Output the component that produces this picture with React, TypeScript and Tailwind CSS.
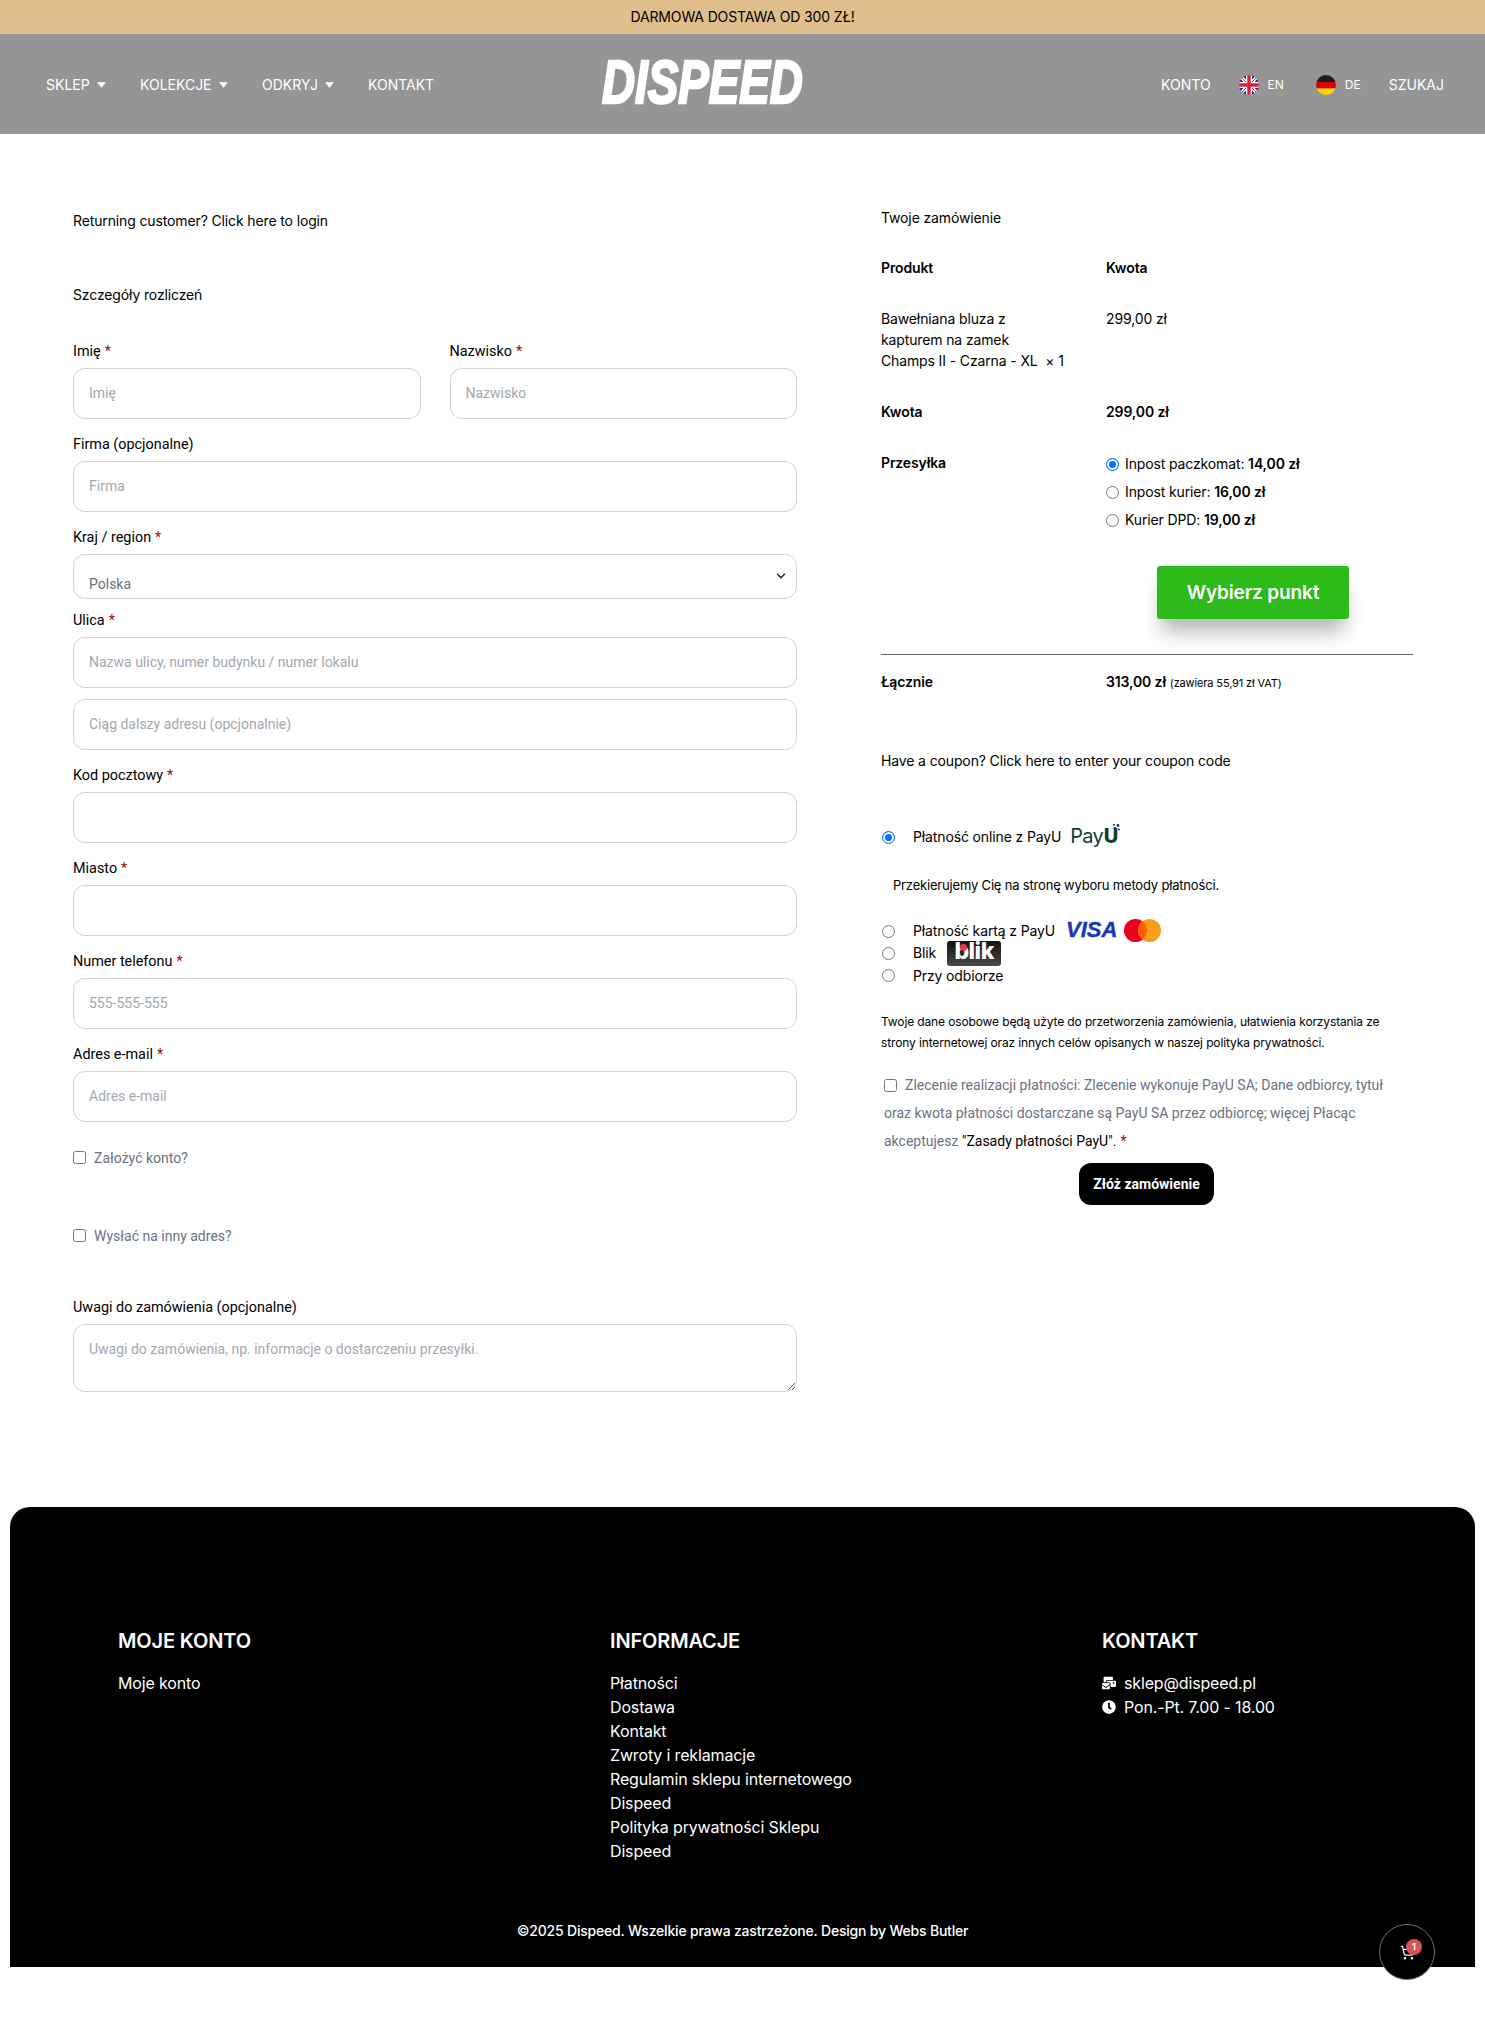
import React from 'react';
import { ChevronDown, ShoppingCart } from 'lucide-react';
import { FaClock, FaMailBulk } from 'react-icons/fa';

const Req = () => <span className="ml-[4px] text-[#b00000]">*</span>;

const inputCls =
  'block w-full h-[51px] px-[15px] pb-[2px] rounded-xl border border-[#d1d1d1] bg-white text-sm tracking-normal outline-none placeholder:text-[#a3a8b0] font-["Roboto",sans-serif]';

const Label: React.FC<{ text: string; req?: boolean }> = ({ text, req }) => (
  <label className='block h-[21px] mb-[7px] text-[14.4px] leading-[23px] tracking-normal text-black font-["Roboto",sans-serif]'>
    {text}
    {req && <Req />}
  </label>
);

const Caret = () => (
  <svg width="9" height="6" viewBox="0 0 9 6" className="ml-[7px]">
    <path d="M0.6 0.5h7.8L4.5 5.4z" fill="#fff" stroke="#fff" strokeWidth="0.6" strokeLinejoin="round" />
  </svg>
);

const Radio: React.FC<{ checked?: boolean }> = ({ checked }) => (
  <span
    className={`inline-block w-[13px] h-[13px] rounded-full shrink-0 ${
      checked ? 'border border-[#0075ff] bg-[#0075ff] shadow-[inset_0_0_0_2px_#fff]' : 'border border-[#767676] bg-white'
    }`}
  />
);

const FlagUK = () => (
  <svg width="20" height="20" viewBox="0 0 20 20">
    <defs>
      <clipPath id="uk-clip">
        <circle cx="10" cy="10" r="10" />
      </clipPath>
    </defs>
    <g clipPath="url(#uk-clip)">
      <rect width="20" height="20" fill="#1f2f8f" />
      <path d="M0 0L20 20M20 0L0 20" stroke="#fff" strokeWidth="3.4" />
      <path d="M0 0L20 20M20 0L0 20" stroke="#d8203c" strokeWidth="1" />
      <path d="M10 0V20M0 10H20" stroke="#fff" strokeWidth="6" />
      <path d="M10 0V20M0 10H20" stroke="#d8203c" strokeWidth="3.4" />
    </g>
  </svg>
);

const FlagDE = () => (
  <svg width="20" height="20" viewBox="0 0 20 20">
    <defs>
      <clipPath id="de-clip">
        <circle cx="10" cy="10" r="10" />
      </clipPath>
    </defs>
    <g clipPath="url(#de-clip)">
      <rect width="20" height="7" fill="#1c1c1c" />
      <rect y="7" width="20" height="6.5" fill="#e00000" />
      <rect y="13.5" width="20" height="6.5" fill="#ffd200" />
    </g>
  </svg>
);

// logo is a real text squeezed to the width of the original wordmark
const Logo = () => (
  <div className="w-[200px] h-[44px] mb-[6px] shrink-0">
    <span className="block w-[270px] origin-top-left scale-x-[0.75] whitespace-nowrap text-[61px] leading-[44px] italic font-black tracking-normal text-white font-['Liberation_Sans',sans-serif] [-webkit-text-stroke:2.5px_#fff]">
      DISPEED
    </span>
  </div>
);

const PayULogo = () => (
  <div className="relative w-[52px] h-[26px] text-[#0f3b3a] text-[20px] leading-[26px] tracking-[-0.8px] whitespace-nowrap">
    Pay<b className="font-extrabold ml-[1px]">U</b>
    <svg width="10" height="9" viewBox="0 0 10 9" className="absolute right-0 top-0">
      <circle cx="6" cy="2.5" r="1.4" fill="#0f3b3a" />
      <circle cx="3" cy="5.5" r="1.4" fill="#0f3b3a" />
      <circle cx="2" cy="1.7" r="1" fill="#0f3b3a" />
      <circle cx="7" cy="6.5" r="1" fill="#0f3b3a" />
    </svg>
  </div>
);

const VisaLogo = () => (
  <span className="block w-[52px] text-[22px] leading-[18px] italic font-black tracking-normal text-[#1a38b8] font-['Liberation_Sans',sans-serif] [-webkit-text-stroke:0.4px_#1a38b8]">
    VISA
  </span>
);

const MastercardLogo = () => (
  <svg width="37" height="23" viewBox="0 0 37 23" className="block">
    <circle cx="11.5" cy="11.5" r="11.5" fill="#e8001c" />
    <circle cx="25.5" cy="11.5" r="11.5" fill="#f79e1b" />
    <path d="M18.5 2.4a11.5 11.5 0 0 1 0 18.2a11.5 11.5 0 0 1 0-18.2z" fill="#ff5f00" />
  </svg>
);

const BlikLogo = () => (
  <div className="relative w-[54px] h-[25px] rounded-[3px] bg-gradient-to-b from-[#111] to-[#4a4a4a] flex items-center justify-center">
    <span className='text-white font-["Inter",sans-serif] font-extrabold text-[23px] leading-none tracking-[-0.5px] -mt-[3px]'>blik</span>
    <span className="absolute left-[13px] top-[3px] w-[7px] h-[7px] rounded-full bg-[#e8374a]" />
  </div>
);

const PayRow: React.FC<{ label: string; checked?: boolean; children?: React.ReactNode; className?: string }> = ({ label, checked, children, className }) => (
  <div className={`flex items-center ${className ?? ''}`}>
    <span className="ml-[1px] mr-[18px] flex">
      <Radio checked={checked} />
    </span>
    <span className="text-sm">{label}</span>
    {children}
  </div>
);

const ShipOption: React.FC<{ label: string; price: string; checked?: boolean }> = ({ label, price, checked }) => (
  <div className="flex items-center gap-[6px]">
    <span className="flex mt-[2px]">
      <Radio checked={checked} />
    </span>
    <span>
      {label}: <b className="font-semibold">{price}</b>
    </span>
  </div>
);

const infoLinks = ['Płatności', 'Dostawa', 'Kontakt', 'Zwroty i reklamacje', 'Regulamin sklepu internetowego Dispeed', 'Polityka prywatności Sklepu Dispeed'];

export default function App() {
  return (
    <div className='relative min-h-[2031px] bg-white text-black font-["Inter",sans-serif] text-sm tracking-[-0.13px]'>
      {/* top bar */}
      <div className="h-[34px] bg-[#dfbe8c] flex items-center justify-center text-sm">DARMOWA DOSTAWA OD 300 ZŁ!</div>

      {/* header */}
      <header className="h-[100px] pt-[2px] bg-[#959595] flex items-center text-white text-sm tracking-normal">
        <nav className="w-[602px] shrink-0 pl-[46px] flex items-center">
          <a className="flex items-center w-[94px]">SKLEP<Caret /></a>
          <a className="flex items-center w-[122px]">KOLEKCJE<Caret /></a>
          <a className="flex items-center w-[106px]">ODKRYJ<Caret /></a>
          <a>KONTAKT</a>
        </nav>
        <Logo />
        <div className="flex-1 flex items-center justify-end pr-[41px]">
          <a>KONTO</a>
          <span className="flex items-center ml-[28px]">
            <FlagUK />
            <span className="ml-[9px] text-xs">EN</span>
          </span>
          <span className="flex items-center ml-[32px]">
            <FlagDE />
            <span className="ml-[9px] text-xs">DE</span>
          </span>
          <a className="ml-[28px]">SZUKAJ</a>
        </div>
      </header>

      {/* checkout */}
      <main className="h-[1373px] flex items-start">
        <section className="ml-[73px] w-[724px] pt-[76px]">
          <p className="leading-[21px]">Returning customer? Click here to login</p>
          <h3 className="mt-[53px] leading-[21px]">Szczegóły rozliczeń</h3>

          <div className="mt-[35px] grid grid-cols-2 gap-x-[29px]">
            <div>
              <Label text="Imię" req />
              <input className={inputCls} placeholder="Imię" />
            </div>
            <div>
              <Label text="Nazwisko" req />
              <input className={inputCls} placeholder="Nazwisko" />
            </div>
          </div>

          <div className="mt-[14px]">
            <Label text="Firma (opcjonalne)" />
            <input className={inputCls} placeholder="Firma" />
          </div>

          <div className="mt-[14px]">
            <Label text="Kraj / region" req />
            <div className="relative h-[45px] rounded-xl border border-[#d1d1d1] px-[15px] pt-[19px] text-sm leading-[21px] tracking-normal text-[#6b7280] font-['Roboto',sans-serif]">
              Polska
              <ChevronDown size={14} strokeWidth={2.5} className="absolute right-[8px] top-[14px] text-[#222]" />
            </div>
          </div>

          <div className="mt-[10px]">
            <Label text="Ulica" req />
            <input className={inputCls} placeholder="Nazwa ulicy, numer budynku / numer lokalu" />
            <input className={`${inputCls} mt-[11px]`} placeholder="Ciąg dalszy adresu (opcjonalnie)" />
          </div>

          <div className="mt-[14px]">
            <Label text="Kod pocztowy" req />
            <input className={inputCls} />
          </div>
          <div className="mt-[14px]">
            <Label text="Miasto" req />
            <input className={inputCls} />
          </div>
          <div className="mt-[14px]">
            <Label text="Numer telefonu" req />
            <input className={inputCls} placeholder="555-555-555" />
          </div>
          <div className="mt-[14px]">
            <Label text="Adres e-mail" req />
            <input className={inputCls} placeholder="Adres e-mail" />
          </div>

          <label className="mt-[25px] h-[21px] flex items-center gap-[8px] text-sm tracking-normal text-[#6b7280] font-['Roboto',sans-serif]">
            <input type="checkbox" className="w-[13px] h-[13px] m-0" />
            Założyć konto?
          </label>
          <label className="mt-[57px] h-[21px] flex items-center gap-[8px] text-sm tracking-normal text-[#6b7280] font-['Roboto',sans-serif]">
            <input type="checkbox" className="w-[13px] h-[13px] m-0" />
            Wysłać na inny adres?
          </label>

          <div className="mt-[50px]">
            <Label text="Uwagi do zamówienia (opcjonalne)" />
            <textarea
              className="block w-full h-[68px] px-[15px] pt-[14px] rounded-xl border border-[#d1d1d1] text-sm leading-[21px] tracking-normal outline-none placeholder:text-[#a3a8b0] font-['Roboto',sans-serif]"
              placeholder="Uwagi do zamówienia, np. informacje o dostarczeniu przesyłki."
            />
          </div>
        </section>

        <section className="ml-[84px] w-[532px] pt-[73px]">
          <h3 className="leading-[21px]">Twoje zamówienie</h3>

          <div className="mt-[29px] grid grid-cols-[225px_1fr] leading-[21px]">
            <div className="font-semibold">Produkt</div>
            <div className="font-semibold">Kwota</div>

            <div className="mt-[30px] w-[200px] whitespace-pre-line">
              {'Bawełniana bluza z\nkapturem na zamek\nChamps II - Czarna - XL\u00a0\u00a0× 1'}
            </div>
            <div className="mt-[30px]">299,00 zł</div>

            <div className="mt-[30px] font-semibold">Kwota</div>
            <div className="mt-[30px] font-semibold">299,00 zł</div>

            <div className="mt-[30px] font-semibold">Przesyłka</div>
            <div className="mt-[31px] flex flex-col gap-[7px]">
              <ShipOption label="Inpost paczkomat" price="14,00 zł" checked />
              <ShipOption label="Inpost kurier" price="16,00 zł" />
              <ShipOption label="Kurier DPD" price="19,00 zł" />
            </div>
          </div>

          <div className="mt-[36px] ml-[276px] w-[192px] h-[53px] pt-[1px] rounded-[3px] bg-[#2cbb18] text-white text-[19px] font-semibold flex items-center justify-center shadow-[0_17px_20px_-5px_rgba(0,0,0,0.3)]">
            Wybierz punkt
          </div>

          <div className="mt-[35px] border-t border-[#666] pt-[16px] grid grid-cols-[225px_1fr] leading-[21px]">
            <div className="font-semibold">Łącznie</div>
            <div>
              <span className="font-semibold">313,00 zł</span> <span className="text-[11px]">(zawiera 55,91 zł VAT)</span>
            </div>
          </div>

          <p className="mt-[56px] leading-[21px]">Have a coupon? Click here to enter your coupon code</p>

          <PayRow className="mt-[52px] h-[28px]" label="Płatność online z PayU" checked>
            <span className="ml-[9px] -mt-[2px]">
              <PayULogo />
            </span>
          </PayRow>
          <p className="mt-[24px] ml-[12px] leading-[21px] text-[13px] tracking-[-0.18px]">Przekierujemy Cię na stronę wyboru metody płatności.</p>
          <PayRow className="mt-[24px] h-[22px]" label="Płatność kartą z PayU">
            <span className="ml-[11px] -mt-[2px]"><VisaLogo /></span>
            <span className="ml-[6px] -mt-[2px]"><MastercardLogo /></span>
          </PayRow>
          <PayRow className="h-[22px]" label="Blik">
            <span className="ml-[11px]"><BlikLogo /></span>
          </PayRow>
          <PayRow className="h-[23px]" label="Przy odbiorze" />

          <p className="mt-[24px] text-xs leading-[21px] w-[510px]">
            Twoje dane osobowe będą użyte do przetworzenia zamówienia, ułatwienia korzystania ze strony internetowej oraz innych celów opisanych w naszej polityka prywatności.
          </p>

          <p className="mt-[18px] pl-[3px] text-sm leading-[28px] tracking-normal w-[510px] text-[#6b7280] font-['Roboto',sans-serif]">
            <input type="checkbox" className="w-[13px] h-[13px] mr-[8px] align-[-2px]" />
            Zlecenie realizacji płatności: Zlecenie wykonuje PayU SA; Dane odbiorcy, tytuł oraz kwota płatności dostarczane są PayU SA przez odbiorcę; więcej Płacąc akceptujesz <span className="text-black">"Zasady płatności PayU".</span>
            <Req />
          </p>

          <div className="mt-[8px] ml-[198px] w-[135px] h-[42px] rounded-xl bg-black text-white text-sm font-bold tracking-normal flex items-center justify-center font-['Roboto',sans-serif]">
            Złóż zamówienie
          </div>
        </section>
      </main>

      {/* footer */}
      <footer className="mx-[10px] h-[460px] bg-black text-white rounded-t-[20px] pt-[120px]">
        <div className="grid grid-cols-[492px_492px_1fr] pl-[108px] text-base leading-6 tracking-[-0.15px]">
          <div>
            <h4 className="text-xl leading-7 font-semibold mb-[16px]">MOJE KONTO</h4>
            <a>Moje konto</a>
          </div>
          <div>
            <h4 className="text-xl leading-7 font-semibold mb-[16px]">INFORMACJE</h4>
            <ul className="w-[260px]">
              {infoLinks.map((l) => (
                <li key={l}>{l}</li>
              ))}
            </ul>
          </div>
          <div>
            <h4 className="text-xl leading-7 font-semibold mb-[16px]">KONTAKT</h4>
            <div className="flex items-center gap-[8px]">
              <FaMailBulk size={14} />
              sklep@dispeed.pl
            </div>
            <div className="flex items-center gap-[8px]">
              <FaClock size={14} />
              Pon.-Pt. 7.00 - 18.00
            </div>
          </div>
        </div>
        <p className="mt-[57px] text-center text-sm font-medium leading-[21px] tracking-[-0.2px]">©2025 Dispeed. Wszelkie prawa zastrzeżone. Design by Webs Butler</p>
      </footer>

      {/* floating cart */}
      <div className="absolute left-[1379px] top-[1924px] w-[56px] h-[56px] rounded-full bg-black border border-[#6b7280] flex items-center justify-center">
        <ShoppingCart size={15} className="text-white" />
        <span className="absolute left-[26px] top-[14px] w-[16px] h-[16px] rounded-full bg-[#d9534f] text-white text-[9px] font-bold flex items-center justify-center">1</span>
      </div>
    </div>
  );
}
